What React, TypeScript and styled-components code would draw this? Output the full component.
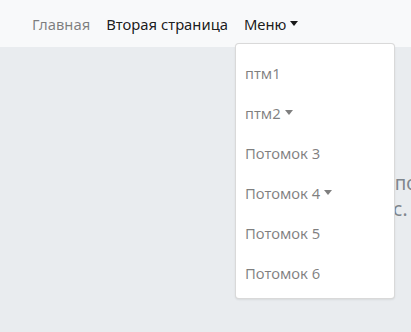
import React from "react";
import styled, { createGlobalStyle } from "styled-components";

const Global = createGlobalStyle`
  html, body { margin: 0; padding: 0; }
  body {
    background: #e9ecef;
    font-family: "Noto Sans", "Open Sans", sans-serif;
    font-size: 14.8px;
    overflow: hidden;
    width: 411px;
    height: 332px;
  }
`;

const Page = styled.div`
  display: flex;
  flex-direction: column;
  width: 411px;
  height: 332px;
  overflow: hidden;
`;

const Navbar = styled.nav`
  display: flex;
  align-items: center;
  height: 47px;
  padding: 0 0 0 24px;
  background: #f8f9fa;
  flex-shrink: 0;
`;

const NavItem = styled.div`
  position: relative;
`;

const NavLink = styled.a<{ $active?: boolean }>`
  display: block;
  padding: 8px 8px;
  line-height: 24px;
  color: ${(p) => (p.$active ? "rgba(0,0,0,0.9)" : "rgba(0,0,0,0.5)")};
  text-decoration: none;
  white-space: nowrap;
  cursor: pointer;
`;

const Caret = styled.span`
  display: inline-block;
  margin-left: 4px;
  vertical-align: 4px;
  border-top: 5px solid currentColor;
  border-left: 4.5px solid transparent;
  border-right: 4.5px solid transparent;
  width: 0;
  height: 0;
`;

const Menu = styled.div`
  position: absolute;
  top: 39px;
  left: -1px;
  width: 158px;
  padding: 9px 0 5px;
  background: #fff;
  border: 1px solid rgba(0, 0, 0, 0.15);
  border-radius: 4px;
  box-shadow: 0 1px 2px rgba(0, 0, 0, 0.08);
  z-index: 10;
`;

const MenuItem = styled.a`
  display: block;
  padding: 8px 9px;
  line-height: 24px;
  color: rgba(0, 0, 0, 0.5);
  text-decoration: none;
  white-space: nowrap;
  cursor: pointer;
`;

const Main = styled.main`
  padding-top: 123px;
`;

const Line = styled.p<{ $indent: number }>`
  margin: 0;
  padding-left: ${(p) => p.$indent}px;
  font-size: 19px;
  line-height: 26px;
  color: #7f868d;
  white-space: nowrap;
`;

const menuItems: { label: string; caret?: boolean }[] = [
  { label: "птм1" },
  { label: "птм2", caret: true },
  { label: "Потомок 3" },
  { label: "Потомок 4", caret: true },
  { label: "Потомок 5" },
  { label: "Потомок 6" },
];

export default function App() {
  return (
    <Page>
      <Global />
      <Navbar>
        <NavItem>
          <NavLink>Главная</NavLink>
        </NavItem>
        <NavItem>
          <NavLink $active>Вторая страница</NavLink>
        </NavItem>
        <NavItem>
          <NavLink $active>
            Меню
            <Caret />
          </NavLink>
          <Menu>
            {menuItems.map((m) => (
              <MenuItem key={m.label}>
                {m.label}
                {m.caret && <Caret />}
              </MenuItem>
            ))}
          </Menu>
        </NavItem>
      </Navbar>
      <Main>
        <Line $indent={311}>Сделано по образцу</Line>
        <Line $indent={313}>Ждём вас.</Line>
      </Main>
    </Page>
  );
}
